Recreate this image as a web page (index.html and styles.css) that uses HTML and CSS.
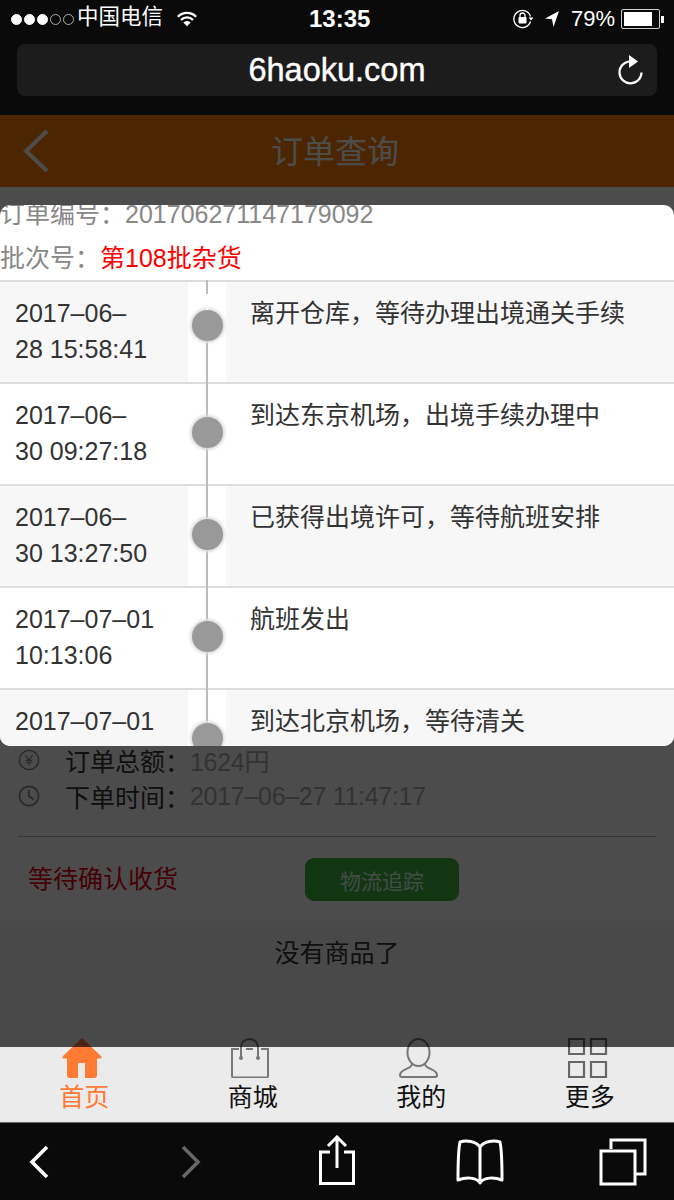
FILE: index.html
```html
<!DOCTYPE html>
<html lang="zh-CN">
<head>
    <meta charset="UTF-8">
    <meta name="viewport" content="width=device-width, initial-scale=1.0">
    <title>订单查询</title>
    <link rel="stylesheet" href="styles.css">
</head>
<body>
    <div class="browser-top">
        <div class="status-bar">
            <div class="status-left">
                <span class="signal">
                    <i class="dot"></i><i class="dot"></i><i class="dot"></i><i class="dot off"></i><i class="dot off"></i>
                </span>
                <span class="carrier">中国电信</span>
                <svg class="wifi" width="22" height="18" viewBox="0 0 24 18">
                    <path d="M2 6.500a14 14 0 0 1 20 0M5.500 10a9 9 0 0 1 13 0" fill="none" stroke="#fff" stroke-width="2.400"/>
                    <path d="M12 17l-4-4.200a5.600 5.600 0 0 1 8 0z" fill="#fff"/>
                </svg>
            </div>
            <div class="status-time">13:35</div>
            <div class="status-right">
                <svg width="22" height="22" viewBox="0 0 22 22">
                    <path d="M18.500 13.500a8.500 8.500 0 1 1 0-5" fill="none" stroke="#fff" stroke-width="1.300"/>
                    <path d="M16.500 9.500h5l-2.500 3z" fill="#fff"/>
                    <rect x="6.500" y="9" width="8" height="6.500" rx="1" fill="#fff"/>
                    <path d="M8 9V7.500a2.500 2.500 0 0 1 5 0V9" fill="none" stroke="#fff" stroke-width="1.300"/>
                </svg>
                <svg class="arrow" width="14" height="16" viewBox="0 0 14 16">
                    <path d="M14 0L0 7.500l7 .8L8.500 16z" fill="#fff"/>
                </svg>
                <span class="battery-text">79%</span>
                <span class="battery"><i class="battery-level"></i></span>
                <i class="battery-tip"></i>
            </div>
        </div>
        <div class="address-bar">
            <span class="address-text">6haoku.com</span>
            <svg class="reload" width="28" height="32" viewBox="0 0 28 32">
                <path d="M13 7.500a11 11 0 1 0 12.500 11" fill="none" stroke="#fff" stroke-width="2.200"/>
                <path d="M13 1l9 6.500-9 6.500z" fill="#fff"/>
            </svg>
        </div>
    </div>

    <div class="page">
        <header class="page-header">
            <svg class="back" width="28" height="44" viewBox="0 0 28 44">
                <path d="M25 2L4 22l21 20" fill="none" stroke="#fff" stroke-width="4"/>
            </svg>
            <h1>订单查询</h1>
        </header>

        <div class="order-info">
            <div class="info-row">
                <svg width="22" height="22" viewBox="0 0 24 24">
                    <circle cx="12" cy="12" r="10.500" fill="none" stroke="#888" stroke-width="1.600"/>
                    <path d="M8 6.500l4 5.500 4-5.500M12 12v6M8.500 12.500h7M8.500 15h7" fill="none" stroke="#888" stroke-width="1.300"/>
                </svg>
                <span class="info-label">订单总额：</span><span class="info-value">1624円</span>
            </div>
            <div class="info-row">
                <svg width="22" height="22" viewBox="0 0 24 24">
                    <circle cx="12" cy="12" r="10.500" fill="none" stroke="#888" stroke-width="1.800"/>
                    <path d="M12 5.500V12l5 4" fill="none" stroke="#888" stroke-width="1.800"/>
                </svg>
                <span class="info-label">下单时间：</span><span class="info-value">2017–06–27 11:47:17</span>
            </div>
            <div class="order-actions">
                <span class="order-status">等待确认收货</span>
                <button class="track-btn">物流追踪</button>
            </div>
        </div>
        <div class="no-more">没有商品了</div>

        <nav class="tabbar">
            <div class="tab active">
                <svg width="40" height="40" viewBox="0 0 40 40">
                    <path d="M20 0L39 18q1.500 2.500-1 2.500h-3V37q0 3-3 3h-9V25h-7v15H8q-3 0-3-3V20.500H2q-2.500 0-1-2.500z" fill="#ff7a33"/>
                </svg>
                <span>首页</span>
            </div>
            <div class="tab">
                <svg width="40" height="40" viewBox="0 0 40 40">
                    <path d="M8 11H1v27a1.500 1.500 0 0 0 1.500 1.500h33a1.500 1.500 0 0 0 1.500-1.500V11h-7M15 11h7" fill="none" stroke="#777" stroke-width="2"/>
                    <path d="M10 19V9a8.500 8 0 0 1 17 0v10" fill="none" stroke="#777" stroke-width="2"/>
                    <circle cx="10" cy="20" r="2" fill="#777"/><circle cx="27" cy="20" r="2" fill="#777"/>
                </svg>
                <span>商城</span>
            </div>
            <div class="tab">
                <svg width="40" height="40" viewBox="0 0 40 40">
                    <ellipse cx="19.500" cy="14.500" rx="11" ry="13.500" fill="none" stroke="#777" stroke-width="2"/>
                    <path d="M13 26c0 5-12 5-12 11 0 1.500 1 2 2 2h33c1 0 2-.5 2-2 0-6-12-6-12-11" fill="none" stroke="#777" stroke-width="2"/>
                </svg>
                <span>我的</span>
            </div>
            <div class="tab">
                <svg width="40" height="40" viewBox="0 0 40 40">
                    <path d="M1 1h15v15H1zM23 1h15v15H23zM1 24h15v15H1zM23 24h15v15H23z" fill="none" stroke="#666" stroke-width="2.200"/>
                </svg>
                <span>更多</span>
            </div>
        </nav>

        <div class="overlay"></div>

        <div class="modal">
            <div class="modal-head">
                <div class="order-no">订单编号：<span class="order-num">201706271147179092</span></div>
                <div class="batch-no">批次号：<span class="batch-name">第108批杂货</span></div>
            </div>
            <div class="timeline">
                <div class="step">
                    <div class="step-time">2017–06–<br>28 15:58:41</div>
                    <div class="step-mark"><i class="step-dot"></i></div>
                    <div class="step-text">离开仓库，等待办理出境通关手续</div>
                </div>
                <div class="step">
                    <div class="step-time">2017–06–<br>30 09:27:18</div>
                    <div class="step-mark"><i class="step-dot"></i></div>
                    <div class="step-text">到达东京机场，出境手续办理中</div>
                </div>
                <div class="step">
                    <div class="step-time">2017–06–<br>30 13:27:50</div>
                    <div class="step-mark"><i class="step-dot"></i></div>
                    <div class="step-text">已获得出境许可，等待航班安排</div>
                </div>
                <div class="step">
                    <div class="step-time">2017–07–01<br>10:13:06</div>
                    <div class="step-mark"><i class="step-dot"></i></div>
                    <div class="step-text">航班发出</div>
                </div>
                <div class="step">
                    <div class="step-time">2017–07–01</div>
                    <div class="step-mark"><i class="step-dot"></i></div>
                    <div class="step-text">到达北京机场，等待清关</div>
                </div>
            </div>
        </div>
    </div>

    <div class="browser-bottom">
        <svg class="tool-back" width="20" height="34" viewBox="0 0 20 34">
            <path d="M18 2L3 17l15 15" fill="none" stroke="#fff" stroke-width="3.600"/>
        </svg>
        <svg class="tool-forward" width="20" height="34" viewBox="0 0 20 34">
            <path d="M2 2l15 15L2 32" fill="none" stroke="#666" stroke-width="3.600"/>
        </svg>
        <svg class="tool-share" width="36" height="50" viewBox="0 0 36 50">
            <path d="M11 17H1.500v31.500h33V17H25" fill="none" stroke="#fff" stroke-width="3"/>
            <path d="M18 33V3M9 11l9-9 9 9" fill="none" stroke="#fff" stroke-width="3"/>
        </svg>
        <svg class="tool-book" width="48" height="46" viewBox="0 0 48 46">
            <path d="M24 8C20 2 10 1 4 3 2 12 2 30 2 41c8-3 18-3 22 3 4-6 14-6 22-3 0-11 0-29-2-38-6-2-16-1-20 5zM24 8v34" fill="none" stroke="#fff" stroke-width="3" stroke-linejoin="round"/>
        </svg>
        <svg class="tool-tabs" width="48" height="48" viewBox="0 0 48 48">
            <path d="M12 11V2h34v34h-10" fill="none" stroke="#fff" stroke-width="3"/>
            <path d="M2 13h34v33H2z" fill="none" stroke="#fff" stroke-width="3"/>
        </svg>
    </div>
</body>
</html>
```

FILE: styles.css
```css
* {
    box-sizing: border-box;
}

body {
    margin: 0;
    width: 674px;
    height: 1200px;
    overflow: hidden;
    font-family: "Liberation Sans", "Noto Sans CJK SC", sans-serif;
    background-color: #0a0a0a;
    color: #333;
}

.browser-top {
    height: 115px;
    background-color: #0a0a0a;
    padding: 0 17px;
}

.status-bar {
    height: 38px;
    margin: 0 -7px 6px -6px;
    display: flex;
    align-items: center;
    justify-content: space-between;
    color: #fff;
    position: relative;
}

.status-left {
    display: flex;
    align-items: center;
}

.signal {
    display: flex;
    gap: 2px;
    margin-right: 3px;
}

.dot {
    width: 11px;
    height: 11px;
    border-radius: 50%;
    background-color: #fff;
    border: 1px solid #fff;
}

.dot.off {
    background-color: transparent;
    border-color: #aaa;
}

.carrier {
    font-size: 21.500px;
    line-height: 26px;
    margin-right: 13px;
    padding-bottom: 4px;
}

.status-time {
    position: absolute;
    left: 298px;
    font-size: 24px;
    font-weight: bold;
}

.status-right {
    display: flex;
    align-items: center;
}

.arrow {
    margin-left: 11px;
}

.battery-text {
    font-size: 22px;
    margin-left: 12px;
}

.battery {
    width: 39px;
    height: 20px;
    border: 1px solid #ccc;
    padding: 2px;
    margin-left: 6px;
    border-radius: 2px;
}

.battery-level {
    display: block;
    width: 84%;
    height: 100%;
    background-color: #fff;
}

.battery-tip {
    width: 3px;
    height: 7px;
    margin-left: 1px;
    background-color: #fff;
}

.address-bar {
    height: 52px;
    background-color: #1c1c1c;
    border-radius: 8px;
    display: flex;
    align-items: center;
    justify-content: center;
    position: relative;
}

.address-text {
    color: #fff;
    font-size: 32.500px;
    -webkit-text-stroke: 0.4px #fff;
}

.reload {
    position: absolute;
    right: 13px;
    top: 10px;
}

.page {
    position: relative;
    height: 1007px;
    background-color: #f5f5f5;
}

.page-header {
    height: 72px;
    background-color: #ff8000;
    display: flex;
    align-items: center;
    justify-content: center;
    position: relative;
}

.page-header h1 {
    margin: -4px 4px 0 0;
    font-size: 32px;
    font-weight: normal;
    color: #fff;
}

.back {
    position: absolute;
    left: 22px;
    top: 14px;
}

/* 后面被遮住的订单内容 */
.order-info {
    padding: 556px 18px 0;
    height: 734px;
    background-color: #fff;
}

.info-row {
    height: 36px;
    display: flex;
    align-items: center;
    font-size: 25px;
    margin-top: -1px;
}

.info-row + .info-row {
    margin-top: 0;
}

.info-row svg {
    margin-right: 25px;
}

.info-label {
    color: #333;
}

.info-value {
    color: #aaa;
    letter-spacing: -0.3px;
}

.order-actions {
    margin-top: 22px;
    border-top: 1px solid #bbb;
    padding: 21px 10px;
    display: flex;
    align-items: center;
}

.order-status {
    color: #e60012;
    font-size: 25px;
    line-height: 43px;
    width: 277px;
}

.track-btn {
    width: 154px;
    height: 43px;
    border: none;
    border-radius: 9px;
    background-color: #3cb43c;
    color: #dfe;
    font-family: inherit;
    font-size: 21px;
}

.no-more {
    text-align: center;
    font-size: 25px;
    color: #333;
    padding-top: 12px;
}

.tabbar {
    position: absolute;
    left: 0;
    right: 0;
    top: 932px;
    height: 75px;
    background-color: #ebebeb;
    display: flex;
}

.tab {
    flex: 1;
    display: flex;
    flex-direction: column;
    align-items: center;
    margin-top: -9px;
    color: #111;
    font-size: 25px;
    line-height: 30px;
}

.tab svg {
    display: block;
    margin: 0 4px 4px 0;
}

.tab.active {
    color: #ff7a33;
}

.overlay {
    position: absolute;
    left: 0;
    right: 0;
    top: 0;
    height: 932px;
    background-color: rgba(0, 0, 0, 0.7);
}

.modal {
    position: absolute;
    left: 0;
    right: 0;
    top: 90px;
    height: 541px;
    background-color: #fff;
    border-radius: 10px;
    overflow: hidden;
}

.modal-head {
    height: 88px;
    font-size: 25px;
    color: #888;
    line-height: 44px;
    margin-top: -13px;
    white-space: nowrap;
}

.batch-name {
    color: #f00;
}

.timeline {
    border-top: 2px solid #ddd;
}

.step {
    height: 102px;
    display: flex;
    border-bottom: 2px solid #ddd;
}

.step:nth-child(odd) {
    background-color: #f7f7f7;
}

.step-time {
    width: 188px;
    padding: 13px 0 0 15px;
    font-size: 25px;
    line-height: 36px;
}

.step-mark {
    width: 38px;
    background-color: #fff;
    position: relative;
}

/* 竖线 */
.step-mark::before {
    content: "";
    position: absolute;
    left: 18px;
    top: -2px;
    bottom: -2px;
    width: 2px;
    background-color: #bbb;
}

.step-dot {
    position: absolute;
    left: 4px;
    top: 33px;
    width: 31px;
    height: 31px;
    border-radius: 50%;
    background-color: #999;
    box-shadow: 0 0 3px 2px #ddd;
}

.step:first-child .step-dot {
    top: 28px;
}

/* 第一个节点上面有一段空白 */
.step:first-child .step-mark::after {
    content: "";
    position: absolute;
    left: 18px;
    top: 12px;
    height: 16px;
    width: 2px;
    background-color: #fff;
}

.step-text {
    flex: 1;
    padding: 13px 0 0 24px;
    font-size: 25px;
    line-height: 36px;
}

.browser-bottom {
    height: 78px;
    background-color: #0a0a0a;
    border-top: 1px solid #666;
    display: flex;
    align-items: center;
}

.tool-back {
    margin-left: 29px;
}

.tool-forward {
    margin-left: 132px;
}

.tool-share {
    margin-left: 118px;
    margin-top: -3px;
}

.tool-book {
    margin-left: 101px;
}

.tool-tabs {
    margin-left: 95px;
}
```
